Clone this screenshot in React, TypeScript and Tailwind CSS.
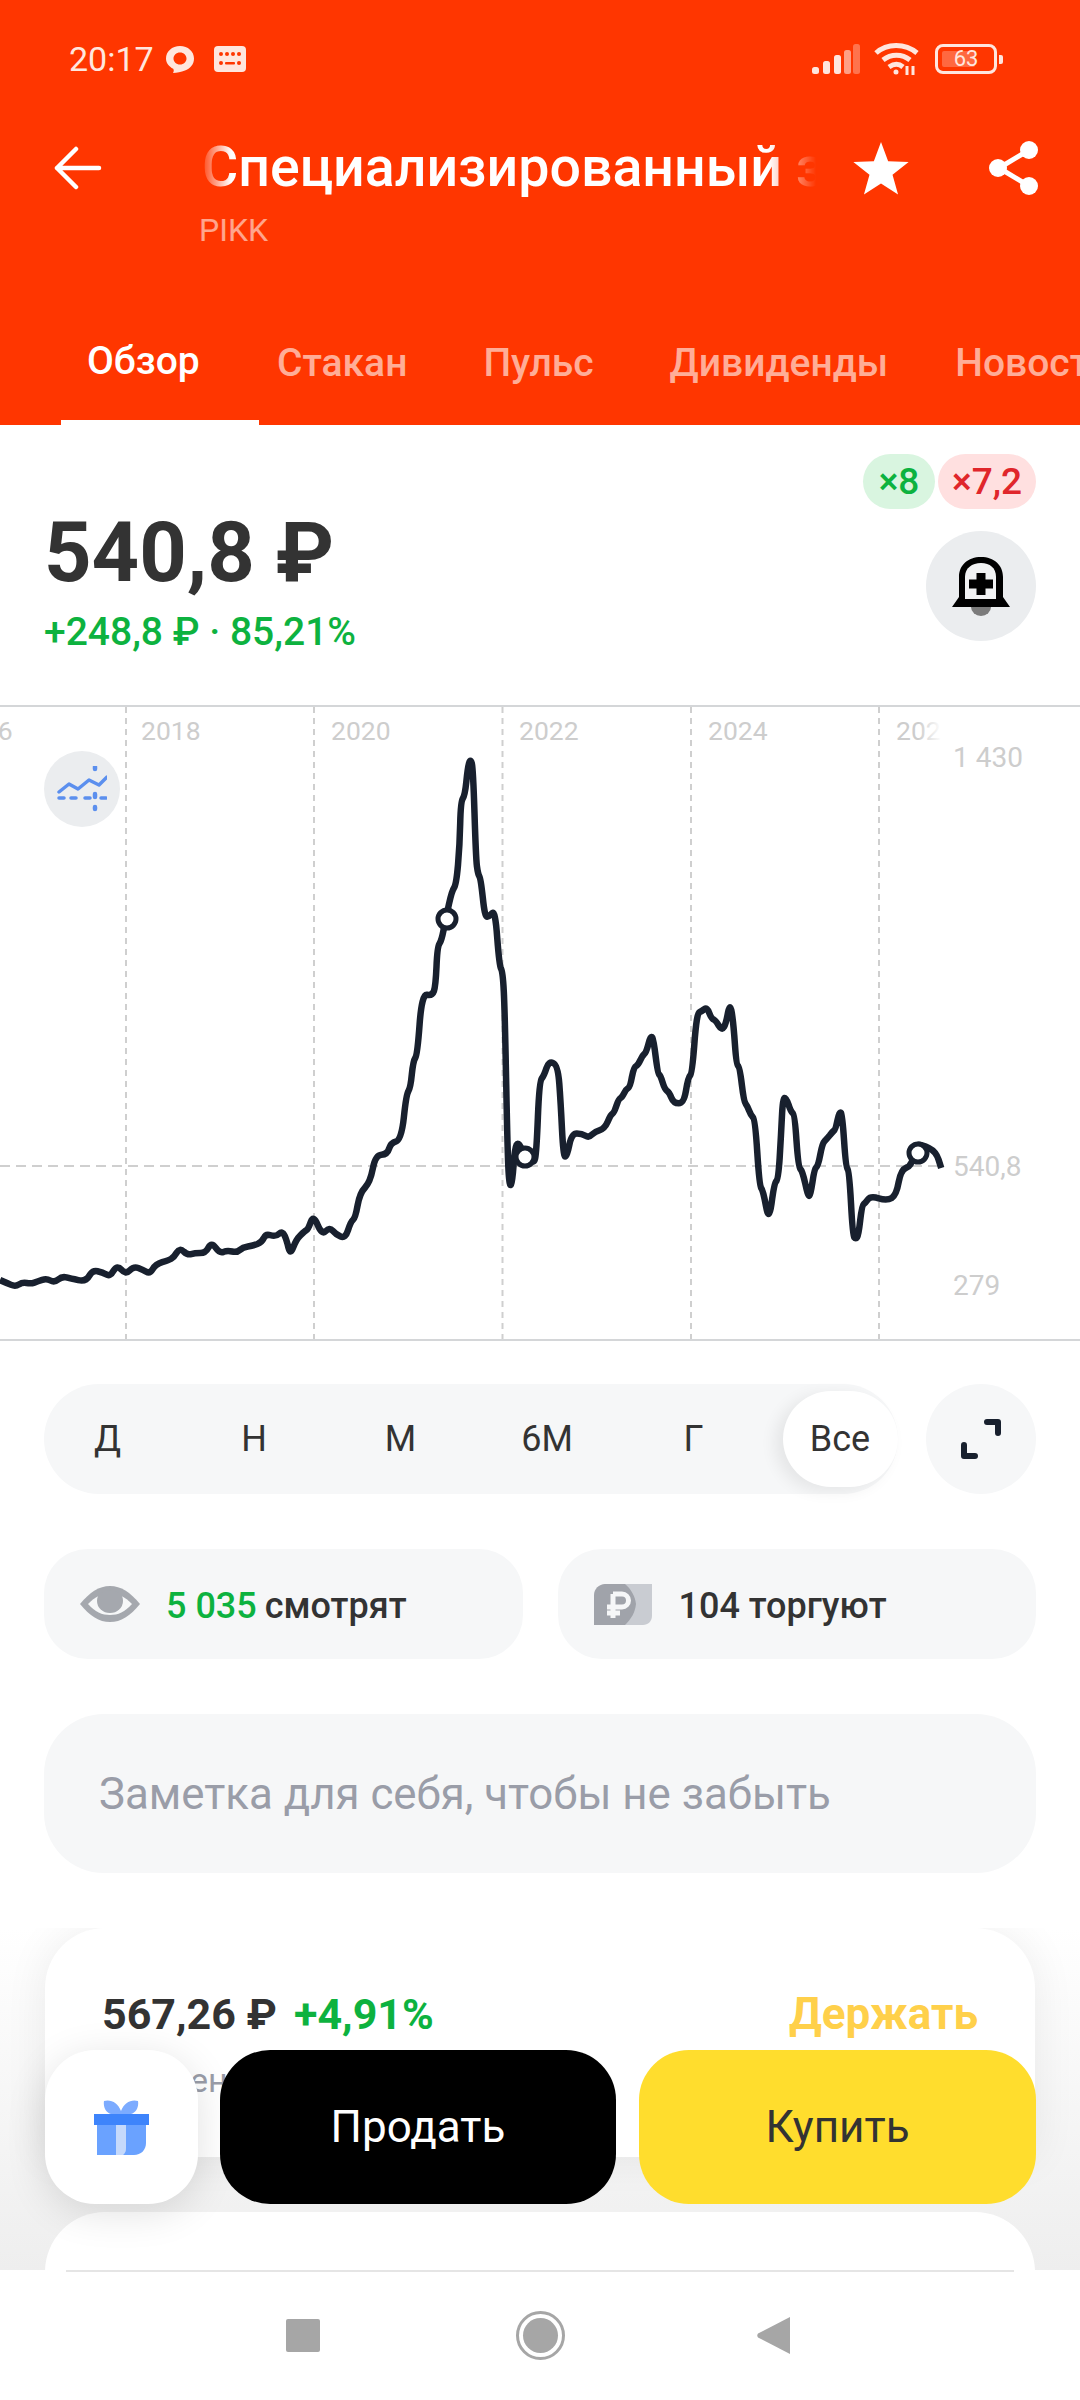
// Raw trace of the price line, measured on the reference: [x, y] pairs
const leftTrace = [
  [0, 1398], [20, 1405], [45, 1414], [65, 1403], [90, 1407], [110, 1401], [135, 1394], [158, 1404], [180, 1389], [205, 1394],
  [250, 1402], [268, 1374], [298, 1379], [320, 1390], [340, 1361], [365, 1385], [388, 1365], [415, 1373], [435, 1383], [452, 1360],
  [490, 1350], [505, 1343], [522, 1320], [545, 1338], [565, 1333], [597, 1333], [614, 1306], [638, 1334], [660, 1326], [688, 1332],
  [705, 1319], [735, 1315], [760, 1307], [772, 1286], [800, 1294], [820, 1279], [832, 1300], [843, 1339], [860, 1300], [885, 1280],
  [895, 1275], [910, 1240], [935, 1290], [957, 1270], [975, 1288], [1003, 1298], [1018, 1258], [1032, 1248], [1045, 1188], [1075, 1162],
  [1090, 1097], [1125, 1095], [1135, 1067], [1166, 1060], [1180, 950], [1192, 935], [1200, 870], [1212, 855], [1225, 708], [1255, 713],
  [1265, 690], [1270, 595], [1282, 580], [1295, 525], [1312, 460], [1325, 445], [1335, 350], [1338, 245], [1350, 230], [1358, 165],
  [1366, 140], [1374, 165], [1382, 380], [1388, 420], [1396, 430], [1408, 523], [1420, 522], [1438, 505], [1450, 640], [1460, 655],
  [1466, 750], [1474, 1100], [1480, 1175], [1488, 1160], [1495, 1080], [1505, 1065], [1520, 1090], [1550, 1120], [1558, 1090], [1566, 920],
];

const rightTrace = [
  [12, 905], [25, 870], [52, 880], [60, 970], [68, 1100], [78, 1100], [92, 1045], [122, 1045], [142, 1055], [160, 1040],
  [188, 1033], [205, 1000], [215, 995], [228, 962], [238, 958], [250, 938], [262, 932], [272, 885], [285, 880], [297, 857],
  [308, 850], [322, 807], [330, 820], [342, 900], [350, 905], [362, 938], [375, 945], [388, 972], [418, 972], [430, 910],
  [442, 900], [455, 755], [470, 750], [485, 740], [498, 768], [510, 772], [528, 797], [540, 780], [552, 727], [562, 780],
  [570, 878], [580, 885], [592, 968], [602, 978], [612, 1000], [625, 1012], [637, 1170], [648, 1182], [665, 1260], [680, 1165],
  [692, 1155], [700, 1050], [705, 960], [715, 958], [728, 992], [740, 1000], [750, 1125], [762, 1135], [778, 1195], [785, 1195],
  [797, 1130], [808, 1122], [820, 1068], [833, 1058], [850, 1040], [858, 1035], [870, 990], [878, 1000], [888, 1125], [898, 1135],
  [908, 1290], [917, 1300], [925, 1290], [935, 1218], [945, 1212], [960, 1195], [1008, 1207], [1035, 1193], [1048, 1132], [1080, 1122],
  [1090, 1072], [1110, 1072], [1150, 1088], [1165, 1128],
];

const points = [
  ...leftTrace.map(([x, y]) => [x / 2.904, y / 2.41 - 5]),
  ...rightTrace.map(([x, y]) => [540 + x / 2.904, y / 2.41 - 5]),
];

function smoothPath(pts: number[][]) {
  let d = `M${pts[0][0].toFixed(1)} ${pts[0][1].toFixed(1)}`;
  for (let i = 1; i < pts.length - 1; i++) {
    const mx = (pts[i][0] + pts[i + 1][0]) / 2;
    const my = (pts[i][1] + pts[i + 1][1]) / 2;
    d += `Q${pts[i][0].toFixed(1)} ${pts[i][1].toFixed(1)} ${mx.toFixed(1)} ${my.toFixed(1)}`;
  }
  const last = pts[pts.length - 1];
  return d + `L${last[0].toFixed(1)} ${last[1].toFixed(1)}`;
}

const gridX = [126, 314, 502.5, 691, 879];
const years = [
  { label: "2016", x: -47 },
  { label: "2018", x: 141 },
  { label: "2020", x: 331 },
  { label: "2022", x: 519 },
  { label: "2024", x: 708 },
  { label: "2026", x: 896 },
];
const markers = [
  [447, 214],
  [525, 452],
  [918, 448],
];

const tabs = [
  { label: "Обзор", cls: "w-[198px] pl-[26px] border-b-[5px] border-white text-white" },
  { label: "Стакан", cls: "ml-[18px] text-white/60" },
  { label: "Пульс", cls: "ml-[76px] text-white/60" },
  { label: "Дивиденды", cls: "ml-[76px] text-white/60" },
  { label: "Новости", cls: "ml-[67px] text-white/60" },
];

const periods = ["Д", "Н", "М", "6М", "Г", "Все"];

function StatusBar() {
  return (
    <div className="h-[118px] flex items-center justify-between pl-[69px] pr-[77px] text-[#ffe6de]">
      <div className="flex items-center">
        <span className="text-[34px] leading-none">20:17</span>
        <svg width="28" height="27" viewBox="0 0 28 27" className="ml-[12px]">
          <path fillRule="evenodd" fill="#ffe6de" d="M14 0c8 0 14 5.500 14 12.500 0 6-4 10-9 12-4 1.500-8 2.300-12 2.500 1-1.500 1-3 .2-4.200C3 20.500 0 17 0 12.500 0 5.500 6 0 14 0Zm0 6.500c-3.800 0-6.500 2.700-6.500 6s2.700 6 6.500 6 6.500-2.700 6.500-6-2.700-6-6.500-6Z" />
        </svg>
        <svg width="32" height="26" viewBox="0 0 32 26" className="ml-[20px]">
          <rect width="32" height="26" rx="4" fill="#ffe6de" />
          <g fill="#ff3600">
            <circle cx="7" cy="8" r="2" /><circle cx="13" cy="8" r="2" /><circle cx="19" cy="8" r="2" /><circle cx="25" cy="8" r="2" />
            <circle cx="7" cy="17" r="2" /><circle cx="25" cy="17" r="2" />
            <rect x="11" y="16" width="10" height="2.500" rx="1" />
          </g>
        </svg>
      </div>
      <div className="flex items-center">
        <svg width="48" height="31" viewBox="0 0 48 31" fill="#ffe6de">
          <rect x="0" y="23" width="7" height="7" rx="2.500" />
          <rect x="11" y="17" width="7" height="13" rx="2.500" />
          <rect x="22" y="11" width="7" height="19" rx="2.500" />
          <rect x="32" y="6" width="7" height="24" rx="2.500" opacity=".6" />
          <rect x="41" y="0" width="7" height="30" rx="2.500" opacity=".35" />
        </svg>
        <svg width="46" height="34" viewBox="0 0 46 34" fill="none" stroke="#ffe6de" strokeWidth="5" className="ml-[14px]">
          <path d="M2 11C13 1 31 1 43 11" />
          <path d="M9 18c8-6.500 19-6.500 27 0" />
          <path d="M15 25c5-3.500 10-3.500 14 0" />
          <circle cx="22" cy="30" r="1.500" fill="#ffe6de" strokeWidth="2" />
          <path d="M33 24v9M39 24v9" strokeWidth="3" />
        </svg>
        <div className="ml-[15px] w-[62px] h-[30px] rounded-[8px] border-[3px] border-[#ffe6de] p-[3px] relative flex items-center justify-center">
          <div className="absolute left-[4px] top-[4px] bottom-[4px] w-[33px] rounded-[2px] bg-white/25" />
          <span className="relative text-[22px] leading-none">63</span>
        </div>
        <div className="ml-[2px] w-[4px] h-[9px] rounded-r-[2px] bg-[#ffe6de]" />
      </div>
    </div>
  );
}

function Header() {
  return (
    <header className="h-[425px] shrink-0 bg-[#ff3600] flex flex-col">
      <StatusBar />
      <div className="relative mt-[4px] h-[92px] flex items-center">
        <svg width="48" height="44" viewBox="0 0 48 44" fill="none" stroke="white" strokeWidth="4.500" strokeLinecap="round" strokeLinejoin="round" className="ml-[54px]">
          <path d="M3 22h42M22 3 3 22l19 19" />
        </svg>
        <div className="absolute left-[199px] w-[617px] overflow-hidden whitespace-nowrap text-[55.5px] font-medium text-white [mask-image:linear-gradient(90deg,transparent_0,black_32px,black_570px,transparent_617px)]">
          <span className="pl-[3px]">Специализированный застройщик ПИК</span>
        </div>
        <svg width="56" height="53" viewBox="0 0 24 23" fill="white" className="absolute left-[853px] top-[20px]">
          <path d="m12 0 3.100 8.300 8.900.4-7 5.500 2.400 8.600L12 18l-7.400 4.800L7 14.200 0 8.700l8.900-.4z" />
        </svg>
        <svg width="50" height="56" viewBox="0 0 50 56" className="absolute left-[989px] top-[18px]">
          <path d="M40 10 10 28l30 18" fill="none" stroke="white" strokeWidth="5" />
          <circle cx="40" cy="10" r="9" fill="white" />
          <circle cx="9" cy="28" r="9" fill="white" />
          <circle cx="40" cy="46" r="9" fill="white" />
        </svg>
      </div>
      <div className="pl-[199px] h-[32px] text-[32px] leading-[32px] text-white/55">PIKK</div>
      <nav className="mt-[56px] h-[123px] pl-[61px] flex overflow-hidden whitespace-nowrap text-[39px] font-medium">
        {tabs.map((t) => (
          <div key={t.label} className={`flex items-center shrink-0 ${t.cls}`}>
            {t.label}
          </div>
        ))}
      </nav>
    </header>
  );
}

function PriceBlock() {
  return (
    <section className="relative h-[280px] shrink-0">
      <div className="absolute right-[44px] top-[29px] flex gap-[3px] text-[37px] leading-[55px] font-medium">
        <span className="w-[72px] h-[55px] rounded-full bg-[#d9f5e0] text-[#0db23f] text-center">×8</span>
        <span className="w-[98px] h-[55px] rounded-full bg-[#ffe0e0] text-[#e0262b] text-center">×7,2</span>
      </div>
      <div className="pl-[44px] pt-[81px] text-[83px] leading-[94px] font-bold text-[#333333]">540,8 ₽</div>
      <div className="pl-[44px] mt-[10px] text-[39px] leading-[44px] font-medium text-[#0db23f]">+248,8 ₽ · 85,21%</div>
      <button className="absolute left-[926px] top-[106px] w-[110px] h-[110px] rounded-full bg-[#ebedef] flex items-center justify-center">
        <svg width="58" height="59" viewBox="0 0 58 59">
          <path d="M19 50a10 9 0 0 0 20 0Z" fill="#7b7b7b" />
          <path d="M0 50 7 40V20C7 8 16 0 29 0s22 8 22 20v20l7 10Z" fill="black" />
          <path d="M13 42V20C13 11 20 6 29 6s15 5 15 14v22Z" fill="#f1f2f3" />
          <path d="M24.500 16h9v6.500H41v9h-7.500V38h-9v-6.500H17v-9h7.500Z" fill="black" />
        </svg>
      </button>
    </section>
  );
}

function Chart() {
  return (
    <section className="relative h-[636px] shrink-0 border-y-2 border-[#d4d6d8]">
      <svg width="1080" height="636" viewBox="0 0 1080 636" className="absolute left-0 top-[-2px]">
        <defs>
          <linearGradient id="fade" x1="0" x2="1" y1="0" y2="0">
            <stop offset="0" stopColor="white" stopOpacity="0" />
            <stop offset="1" stopColor="white" />
          </linearGradient>
        </defs>
        {gridX.map((x) => (
          <line key={x} x1={x} x2={x} y1="2" y2="634" stroke="#cfcfcf" strokeWidth="2" strokeDasharray="6 5" />
        ))}
        <line x1="0" x2="942" y1="461" y2="461" stroke="#cfcfcf" strokeWidth="2" strokeDasharray="10 6" />
        {years.map((y) => (
          <text key={y.label} x={y.x} y="35" fontSize="26.500" fill="#cdcdcd">{y.label}</text>
        ))}
        <rect x="918" y="10" width="24" height="40" fill="url(#fade)" />
        <rect x="942" y="10" width="20" height="40" fill="white" />
        <path d={smoothPath(points)} fill="none" stroke="#18202e" strokeWidth="6.500" strokeLinejoin="round" />
        {markers.map(([x, y]) => (
          <circle key={x} cx={x} cy={y} r="9" fill="white" stroke="#18202e" strokeWidth="5" />
        ))}
        <text x="953" y="62" fontSize="28" fill="#cdcdcd">1 430</text>
        <text x="953" y="471" fontSize="28" fill="#cdcdcd">540,8</text>
        <text x="953" y="590" fontSize="28" fill="#cdcdcd">279</text>
      </svg>
      <div className="absolute left-[44px] top-[44px] w-[76px] h-[76px] rounded-full bg-[#ebedef] flex items-center justify-center">
        <svg width="50" height="46" viewBox="0 0 50 46" fill="none" stroke="#5b8fee" strokeWidth="3.500" strokeLinecap="round" strokeLinejoin="round">
          <path d="m2 26 10-8 9 5 11-9 10 5 8-8" />
          <path d="M2 32h5M14 32h5M28 32h5M44 32h5" />
          <path d="M38 1v2M38 28v3M38 41v2" strokeWidth="4.500" />
        </svg>
      </div>
    </section>
  );
}

function Controls() {
  return (
    <section className="shrink-0 px-[44px] pt-[43px] flex flex-col">
      <div className="flex justify-between">
        <div className="w-[854px] h-[110px] rounded-full bg-[#f6f7f8] pl-[6px] flex items-center gap-[31.5px] text-[36px] text-[#333333]">
          {periods.map((p, i) => (
            <div
              key={p}
              className={
                i === 5
                  ? "w-[115px] h-[96px] rounded-full bg-white shadow-[-8px_4px_16px_rgba(0,0,0,0.07)] flex items-center justify-center"
                  : "w-[115px] h-[96px] flex items-center justify-center"
              }
            >
              {p}
            </div>
          ))}
        </div>
        <button className="w-[110px] h-[110px] rounded-full bg-[#f6f7f8] flex items-center justify-center">
          <svg width="40" height="40" viewBox="0 0 40 40" fill="none" stroke="#18202e" strokeWidth="6" strokeLinecap="round" strokeLinejoin="round">
            <path d="M26 3h11v11M3 26v11h11" />
          </svg>
        </button>
      </div>

      <div className="mt-[55px] grid grid-cols-2 gap-[35px]">
        <div className="h-[110px] rounded-[44px] bg-[#f6f7f8] flex items-center pl-[36px] text-[36px] font-medium text-[#333333]">
          <svg width="60" height="36" viewBox="0 0 60 36" className="shrink-0">
            <path d="M0 18C10 6 19 0 30 0s20 6 30 18c-10 12-19 18-30 18S10 30 0 18Z" fill="#a5a8ae" />
            <path d="M8 18c7-7 14-11 22-11s15 4 22 11c-7 8-14 11-22 11S15 26 8 18Z" fill="#f6f7f8" />
            <path d="M20 7a22 22 0 0 1 20 0c2 2 3 5 3 8a13 12 0 0 1-26 0c0-3 1-6 3-8Z" fill="#a5a8ae" />
          </svg>
          <span className="ml-[26px] pt-[3px] text-[#0db23f]">5 035</span>
          <span className="ml-[8px] pt-[3px]">смотрят</span>
        </div>
        <div className="h-[110px] rounded-[44px] bg-[#f6f7f8] flex items-center pl-[36px] text-[36px] font-medium text-[#333333]">
          <svg width="58" height="41" viewBox="0 0 58 41" className="shrink-0">
            <path d="M10 0h48v32c0 5-4 9-9 9H22Z" fill="#c9ccd2" />
            <path d="M11 0h20c6 5 10 12 11 20-1 9-5 15-11 21H0V11C0 5 5 0 11 0Z" fill="#a0a3aa" />
            <path d="M19 10h9a6.500 6.500 0 0 1 0 13h-9M13 23h6M13 29h13M19 10v24" fill="none" stroke="#f6f7f8" strokeWidth="5" />
          </svg>
          <span className="ml-[27px] pt-[3px]">104 торгуют</span>
        </div>
      </div>

      <div className="mt-[55px] h-[159px] rounded-[60px] bg-[#f6f7f8] flex items-center pl-[55px] pt-[2px] text-[43.8px] text-[#9a9da8]">
        Заметка для себя, чтобы не забыть
      </div>
    </section>
  );
}

function Cards() {
  return (
    <section className="flex-1 min-h-0 mt-[55px] px-[45px] overflow-hidden bg-gradient-to-b from-white to-[#eeeeee] flex flex-col">
      <div className="h-[229px] shrink-0 rounded-t-[60px] bg-white shadow-[0_0_44px_rgba(0,0,0,0.07)] px-[57px] pt-[61px]">
        <div className="flex items-center justify-between h-[50px]">
          <div className="flex items-center gap-[17px] font-bold text-[43px]">
            <span className="text-[#333333]">567,26 ₽</span>
            <span className="text-[#0db23f]">+4,91%</span>
          </div>
          <span className="text-[44px] font-bold text-[#ffd04a]">Держать</span>
        </div>
        <div className="mt-[21px] -ml-[14px] text-[34px] leading-[40px] text-[#9a9da8]">Рекомендация</div>
      </div>
      <div className="mt-[55px] h-[100px] shrink-0 rounded-t-[60px] bg-white" />
    </section>
  );
}

function ActionBar() {
  return (
    <div className="absolute left-[45px] top-[2050px] w-[991px] h-[154px] flex gap-[22px] text-[44px]">
      <button className="w-[153px] rounded-[50px] bg-white shadow-[0_8px_40px_rgba(0,0,0,0.12)] flex items-center justify-center">
        <svg width="55" height="55" viewBox="0 0 55 55">
          <path d="M10 1c7-2 14 2 17 10 3-8 10-12 17-10 1 6-2 12-7 13H17C12 13 9 7 10 1Z" fill="#7cabff" />
          <path d="M3 25h19v30H3Z" fill="#6aa2ff" />
          <path d="M22 25h10v23c0 3-1 5-3 7h-7Z" fill="#c5d9fb" />
          <path d="M32 25h20v18c0 7-5 12-12 12h-11c2-2 3-4 3-7Z" fill="#6aa2ff" />
          <rect x="0" y="14" width="55" height="11" fill="#3e84fb" />
        </svg>
      </button>
      <button className="w-[396px] rounded-[50px] bg-black text-white">Продать</button>
      <button className="w-[397px] ml-px rounded-[50px] bg-[#ffdd2d] text-[#333333]">Купить</button>
    </div>
  );
}

function NavBar() {
  return (
    <footer className="h-[130px] shrink-0 bg-white relative flex items-center">
      <div className="absolute left-[66px] right-[66px] top-0 h-[2px] bg-[#e5e5e5]" />
      <div className="ml-[286px] w-[34px] h-[33px] rounded-[2px] bg-[#a6a6a6]" />
      <div className="ml-[196px] w-[49px] h-[49px] rounded-full border-[3px] border-[#a6a6a6] p-[4px]">
        <div className="w-full h-full rounded-full bg-[#a6a6a6]" />
      </div>
      <svg width="33" height="37" viewBox="0 0 33 37" className="ml-[192px]">
        <path d="M33 0v37L1 20.500c-1-1-1-3 0-4Z" fill="#a6a6a6" />
      </svg>
    </footer>
  );
}

export default function App() {
  return (
    <div className="relative w-[1080px] h-[2400px] overflow-hidden bg-white flex flex-col font-[Roboto,sans-serif]">
      <Header />
      <PriceBlock />
      <Chart />
      <Controls />
      <Cards />
      <NavBar />
      <ActionBar />
    </div>
  );
}
